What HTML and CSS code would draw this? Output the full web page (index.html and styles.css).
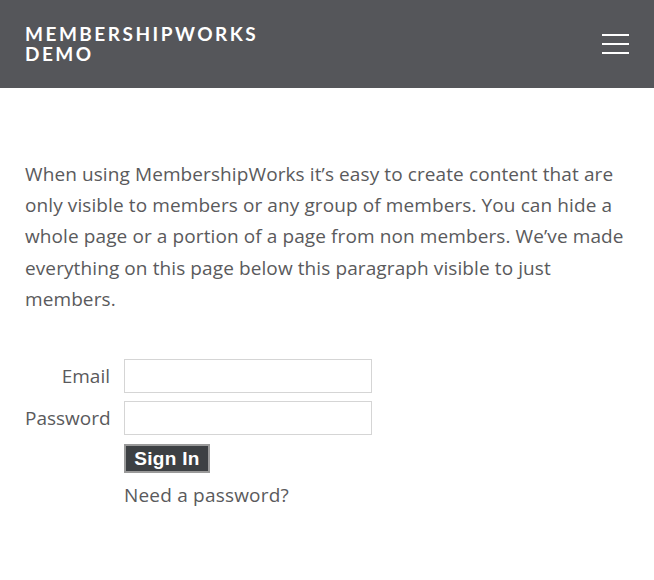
FILE: index.html
```html
<!DOCTYPE html>
<html>
<head>
<meta charset="utf-8">
<link rel="stylesheet" href="styles.css">
</head>
<body>
<header class="site-header">
  <div class="brand">MEMBERSHIPWORKS<br>DEMO</div>
  <button class="menu-toggle" aria-label="Menu">
    <span class="bar"></span><span class="bar"></span><span class="bar"></span>
  </button>
</header>
<main class="content">
  <p class="intro">When using MembershipWorks it’s easy to create content that are only visible to members or any group of members. You can hide a whole page or a portion of a page from non members. We’ve made everything on this page below this paragraph visible to just members.</p>
  <form class="login">
    <label class="label" for="email">Email</label>
    <input class="field" id="email" type="text">
    <label class="label" for="pw">Password</label>
    <input class="field" id="pw" type="password">
    <span></span>
    <div class="actions">
      <button type="button" class="signin">Sign In</button>
      <a class="need" href="#">Need a password?</a>
    </div>
  </form>
</main>
</body>
</html>
```

FILE: styles.css
```css
html, body {
  margin: 0;
  padding: 0;
  background: #ffffff;
}
body {
  font-family: "Open Sans", "Lato", sans-serif;
  color: #5a5a5c;
}
.site-header {
  height: 88px;
  background: #55565a;
  display: flex;
  align-items: center;
  justify-content: space-between;
  padding: 0 25px;
  box-sizing: border-box;
}
.brand {
  color: #ffffff;
  font-family: "Lato", sans-serif;
  font-weight: 700;
  font-size: 19px;
  line-height: 20px;
  letter-spacing: 2.5px;
}
.menu-toggle {
  background: none;
  border: 0;
  padding: 0;
  width: 27px;
  display: flex;
  flex-direction: column;
  gap: 7px;
  cursor: pointer;
}
.bar {
  display: block;
  height: 2px;
  width: 27px;
  background: #ffffff;
}
.content {
  padding: 0 25px;
}
.intro {
  margin: 71px 0 0;
  font-size: 19px;
  line-height: 31.2px;
  letter-spacing: 0.1px;
}
.login {
  margin-top: 44px;
  display: grid;
  grid-template-columns: 85px 248px;
  column-gap: 14px;
  row-gap: 8px;
  align-items: center;
}
.label {
  text-align: right;
  font-size: 19px;
  letter-spacing: 0;
  white-space: nowrap;
}
.field {
  box-sizing: border-box;
  width: 248px;
  height: 34px;
  border: 1px solid #d5d5d5;
  margin: 0;
  padding: 4px 6px;
  font-size: 16px;
}
.actions {
  display: flex;
  flex-direction: column;
  align-items: flex-start;
}
.signin {
  box-sizing: border-box;
  width: 86px;
  height: 29px;
  margin: 1px 0 0;
  padding: 0;
  background: #3d4043;
  border: 2px solid #9a9a9a;
  color: #ffffff;
  font-family: "Liberation Sans", sans-serif;
  font-weight: 700;
  font-size: 19px;
  line-height: 25px;
  letter-spacing: 0.3px;
}
.need {
  margin-top: 9px;
  font-size: 19px;
  color: #5a5a5c;
  text-decoration: none;
  letter-spacing: 0.2px;
}
```
